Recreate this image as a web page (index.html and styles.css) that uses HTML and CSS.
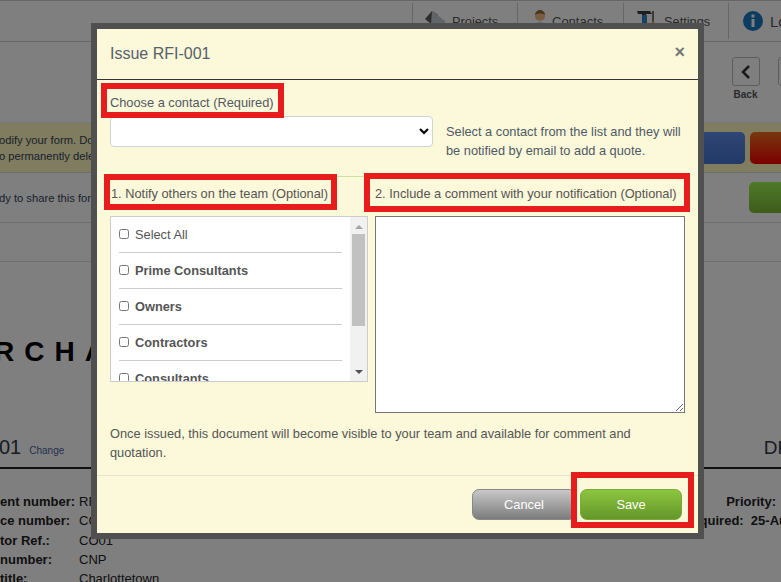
FILE: index.html
```html
<!DOCTYPE html>
<html lang="en">
<head>
<meta charset="utf-8">
<title>Issue RFI-001</title>
<link rel="stylesheet" href="styles.css">
</head>
<body>
<div class="page">
  <nav class="topnav">
    <a class="nav-item nav-projects"><svg class="nav-icon" viewBox="0 0 20 22"><path d="M0 9 7 1l6 4-7 9z" fill="#5a5a5a"/><path d="M7 1l13 10v11H6V14z" fill="#c4cad0"/></svg>Projects</a>
    <a class="nav-item nav-contacts"><svg class="nav-icon-sm" viewBox="0 0 16 22"><circle cx="8" cy="6" r="5" fill="#f0b888"/><path d="M3 5a5 5 0 0 1 10 0C10 3 6 3 3 5z" fill="#9a6a30"/><path d="M0 22c0-6 3-10 8-10s8 4 8 10z" fill="#c4d4e4"/></svg>Contacts</a>
    <a class="nav-item nav-settings"><svg class="nav-icon" viewBox="0 0 20 22"><path d="M0 1h13l2 3H9v1H5V4H1z" fill="#3c3c3c"/><path d="M5 5h5v13H5z" fill="#2f86c4"/><path d="M15 1h2v11h-2z" fill="#777"/><path d="m16 11 3 3-1 4h-4l-1-4z" fill="#e8b030"/></svg>Settings</a>
    <a class="nav-item nav-info"><svg class="nav-icon" viewBox="0 0 20 22"><circle cx="10" cy="11" r="10" fill="#1a78c2"/><path d="M8.500 9h3v8h-3zM8.500 4.500h3v3h-3z" fill="#fff"/></svg>Lo</a>
  </nav>
  <div class="toolbar">
    <div class="tool"><span class="tool-btn"><svg viewBox="0 0 12 16" class="chev"><path d="M9 2 3 8l6 6" fill="none" stroke="#333" stroke-width="2.500"/></svg></span><span class="tool-label">Back</span></div>
    <div class="tool"><span class="tool-btn"></span><span class="tool-label">Ex</span></div>
  </div>
  <div class="banner">
    <p class="banner-text">odify your form. Do<br>o permanently delet</p>
    <div class="banner-actions"><span class="act act-blue"></span><span class="act act-red"></span></div>
  </div>
  <div class="share">
    <p class="banner-text">dy to share this for</p>
    <span class="act act-green"></span>
  </div>
  <div class="spacer"></div>
  <div class="logo-row"><span class="logo">RCHA</span></div>
  <div class="doc-head"><span class="doc-no">01</span><a class="doc-change">Change</a><span class="doc-status">DF</span></div>
  <div class="meta">
    <div class="meta-left">
      <b>ent number:</b><span>RFI-001</span>
      <b>ce number:</b><span>CO01</span>
      <b>tor Ref.:</b><span>CO01</span>
      <b>number:</b><span>CNP</span>
      <b>title:</b><span>Charlottetown</span>
    </div>
    <div class="meta-right">
      <b>Priority:</b>
      <b>quired:&nbsp; 25-Au</b>
    </div>
  </div>
</div>

<div class="overlay"></div>

<section class="modal">
  <header class="modal-head">
    <h1 class="modal-title">Issue RFI-001</h1>
    <span class="modal-close">×</span>
  </header>
  <div class="modal-body">
    <p class="label label-contact">Choose a contact (Required)</p>
    <div class="contact-row">
      <select class="contact-select"><option></option></select>
      <p class="contact-help">Select a contact from the list and they will be notified by email to add a quote.</p>
    </div>
    <div class="columns">
      <div class="col-left">
        <p class="label label-col">1. Notify others on the team (Optional)</p>
        <div class="picker">
          <ul class="picker-list">
            <li class="picker-item"><input type="checkbox"><span>Select All</span></li>
            <li class="picker-item"><input type="checkbox"><b>Prime Consultants</b></li>
            <li class="picker-item"><input type="checkbox"><b>Owners</b></li>
            <li class="picker-item"><input type="checkbox"><b>Contractors</b></li>
            <li class="picker-item"><input type="checkbox"><b>Consultants</b></li>
          </ul>
          <div class="scrollbar">
            <span class="arrow-up"></span>
            <span class="thumb"></span>
            <span class="arrow-down"></span>
          </div>
        </div>
      </div>
      <div class="col-right">
        <p class="label label-col label-col-r">2. Include a comment with your notification (Optional)</p>
        <textarea class="comment"></textarea>
      </div>
    </div>
    <p class="notice">Once issued, this document will become visible to your team and available for comment and quotation.</p>
  </div>
  <footer class="modal-foot">
    <button class="btn btn-cancel">Cancel</button>
    <button class="btn btn-save">Save</button>
  </footer>
</section>

<div class="mark mark-contact"></div>
<div class="mark mark-notify"></div>
<div class="mark mark-comment"></div>
<div class="mark mark-save"></div>
</body>
</html>
```
FILE: styles.css
```css
* { box-sizing: border-box; }
html, body { margin: 0; height: 582px; overflow: hidden; }
body { position: relative; background: #fff; font-family: "Liberation Sans", Arial, sans-serif; font-size: 12px; color: #333; }
p, h1, ul { margin: 0; padding: 0; }

.page { width: 781px; height: 582px; overflow: hidden; }
.topnav { height: 42px; border-top: 1px solid #ccc; border-bottom: 1px solid #ccc; display: flex; justify-content: flex-end; }
.nav-item { display: flex; align-items: center; gap: 7px; margin-top: 2px; height: 36px; border-left: 1px solid #ccc; font-size: 12.800px; color: #555; }
.nav-projects { width: 105px; padding-left: 12px; }
.nav-contacts { width: 106px; padding-left: 14px; gap: 4px; font-size: 13px; }
.nav-settings { width: 105px; padding-left: 13px; }
.nav-info { width: 53px; padding-left: 14px; font-size: 15px; }
.nav-icon { width: 20px; height: 22px; flex: none; }
.nav-icon-sm { width: 16px; height: 22px; flex: none; }
.toolbar { height: 80px; display: flex; justify-content: flex-end; gap: 19px; padding: 15px 0 0; margin-right: -24px; }
.tool { width: 27px; display: flex; flex-direction: column; align-items: center; gap: 3px; }
.tool-btn { width: 28px; height: 29px; flex: none; border: 1px solid #bbb; border-radius: 3px; background: #fff; display: flex; align-items: center; justify-content: center; }
.chev { width: 12px; height: 16px; }
.tool-label { font-size: 10px; font-weight: bold; color: #555; }
.banner { height: 51px; background: #fff9c0; border-top: 1px solid #eee; border-bottom: 1px solid #ddd; display: flex; justify-content: space-between; padding-top: 9px; }
.banner-text { font-size: 11.200px; line-height: 16px; color: #345; margin-left: -1px; white-space: nowrap; }
.banner-actions { margin-right: -40px; display: flex; gap: 5px; }
.act { display: block; border-radius: 5px; }
.act-blue { width: 100px; height: 32px; margin-left: -60px; background: linear-gradient(#5e8cec, #4474cc); }
.act-red { width: 71px; height: 32px; background: linear-gradient(#f0701e, #f60000); }
.share { height: 50px; border-bottom: 1px solid #ddd; display: flex; justify-content: space-between; align-items: center; }
.act-green { width: 60px; height: 31px; margin-right: -28px; background: linear-gradient(#9ef450, #7cb838); border-radius: 5px; }
.spacer { height: 39px; border-bottom: 1px solid #ddd; }
.logo-row { height: 175px; padding-top: 68px; white-space: nowrap; margin-left: -6px; }
.logo { font-size: 28px; font-weight: bold; letter-spacing: 10px; color: #000; line-height: 44px; }
.doc-head { height: 21px; display: flex; align-items: center; }
.doc-no { font-size: 20px; color: #2f3a44; margin-left: -1px; }
.doc-change { margin-left: 8px; font-size: 10px; color: #4a5fa0; padding-top: 5px; }
.doc-status { margin-left: auto; margin-right: -8px; font-size: 19px; color: #2f3a44; }
.meta { display: flex; justify-content: space-between; margin-top: 9px; padding-top: 23px; border-top: 2px solid #222; font-size: 13px; color: #222; }
.meta-left { display: grid; grid-template-columns: 79px auto; grid-auto-rows: 19.300px; white-space: nowrap; align-items: center; }
.meta-right { display: flex; flex-direction: column; align-items: flex-end; line-height: 19.300px; margin-right: -6px; }
.meta-right b:first-child { margin-right: 11px; }

.overlay { position: absolute; inset: 0; background: rgba(0, 0, 0, .5); }

.modal { position: absolute; left: 91px; top: 23px; width: 613px; height: 516px; border: 6px solid #505050; background: #fcf8da; display: flex; flex-direction: column; color: #555; font-size: 12.800px; }
.modal-head { height: 51px; flex: none; border-bottom: 1px solid #333; display: flex; align-items: center; justify-content: space-between; padding: 0 13px; }
.modal-title { font-size: 16px; font-weight: normal; color: #56616c; }
.modal-close { font-size: 18px; font-weight: bold; color: #777; line-height: 20px; margin-bottom: 5px; }
.modal-body { flex: 1; padding: 0 13px; display: flex; flex-direction: column; }
.label { line-height: 16px; color: #555; }
.label-contact { padding-top: 15px; height: 36px; color: #4f5a66; }
.contact-row { display: flex; gap: 13px; height: 60px; }
.contact-select { width: 323px; height: 31px; background: #fff; border: 1px solid #ced4da; border-radius: 4px; flex: none; }
.contact-help { width: 240px; line-height: 19px; padding-top: 6px; color: #4f5a66; }
.columns { display: flex; gap: 7px; border-top: 1px solid #c9e2a4; }
.col-left { width: 258px; flex: none; }
.col-right { flex: 1; }
.label-col { height: 39px; padding: 9px 0 0 1px; white-space: nowrap; }
.label-col-r { padding-left: 0; }
.picker { height: 166px; background: #fff; border: 1px solid #ccc; display: flex; }
.picker-list { flex: 1; list-style: none; padding: 0 8px; overflow: hidden; }
.picker-item { height: 36px; display: flex; align-items: center; gap: 6px; border-bottom: 1px solid #ccc; color: #555; }
.picker-item input { width: 10px; height: 10px; margin: 0 0 2px; flex: none; }
.scrollbar { width: 17px; flex: none; background: #f1f1f1; display: flex; flex-direction: column; align-items: center; padding: 8px 0 7px; }
.arrow-up { width: 0; height: 0; border: 4px solid transparent; border-top: 0; border-bottom: 4px solid #a3a3a3; }
.arrow-down { width: 0; height: 0; border: 4px solid transparent; border-bottom: 0; border-top: 4px solid #505050; margin-top: auto; }
.thumb { width: 13px; height: 92px; background: #c1c1c1; margin-top: 5px; }
.comment { display: block; width: 310px; height: 197px; background: #fff; border: 1px solid #767676; padding: 2px; }
.notice { margin-top: 11px; line-height: 19px; width: 540px; color: #555; }
.modal-foot { height: 58px; flex: none; border-top: 1px solid #e3e3d8; display: flex; justify-content: flex-end; align-items: flex-start; gap: 4px; padding: 13px 16px 0 0; }
.btn { height: 31px; border-radius: 7px; font-family: inherit; font-size: 12.800px; color: #fff; padding: 0; }
.btn-cancel { width: 104px; background: linear-gradient(#c8c8c8, #7c7c7c); border: 1px solid #888; }
.btn-save { width: 102px; background: linear-gradient(#8cc63f, #64962a); border: 1px solid #7ba838; }

.mark { position: absolute; border: 6px solid #e71c1c; }
.mark-contact { left: 101px; top: 83px; width: 183px; height: 35px; }
.mark-notify { left: 104px; top: 174px; width: 233px; height: 36px; }
.mark-comment { left: 364px; top: 173px; width: 326px; height: 39px; }
.mark-save { left: 571px; top: 472px; width: 123px; height: 56px; }
```
